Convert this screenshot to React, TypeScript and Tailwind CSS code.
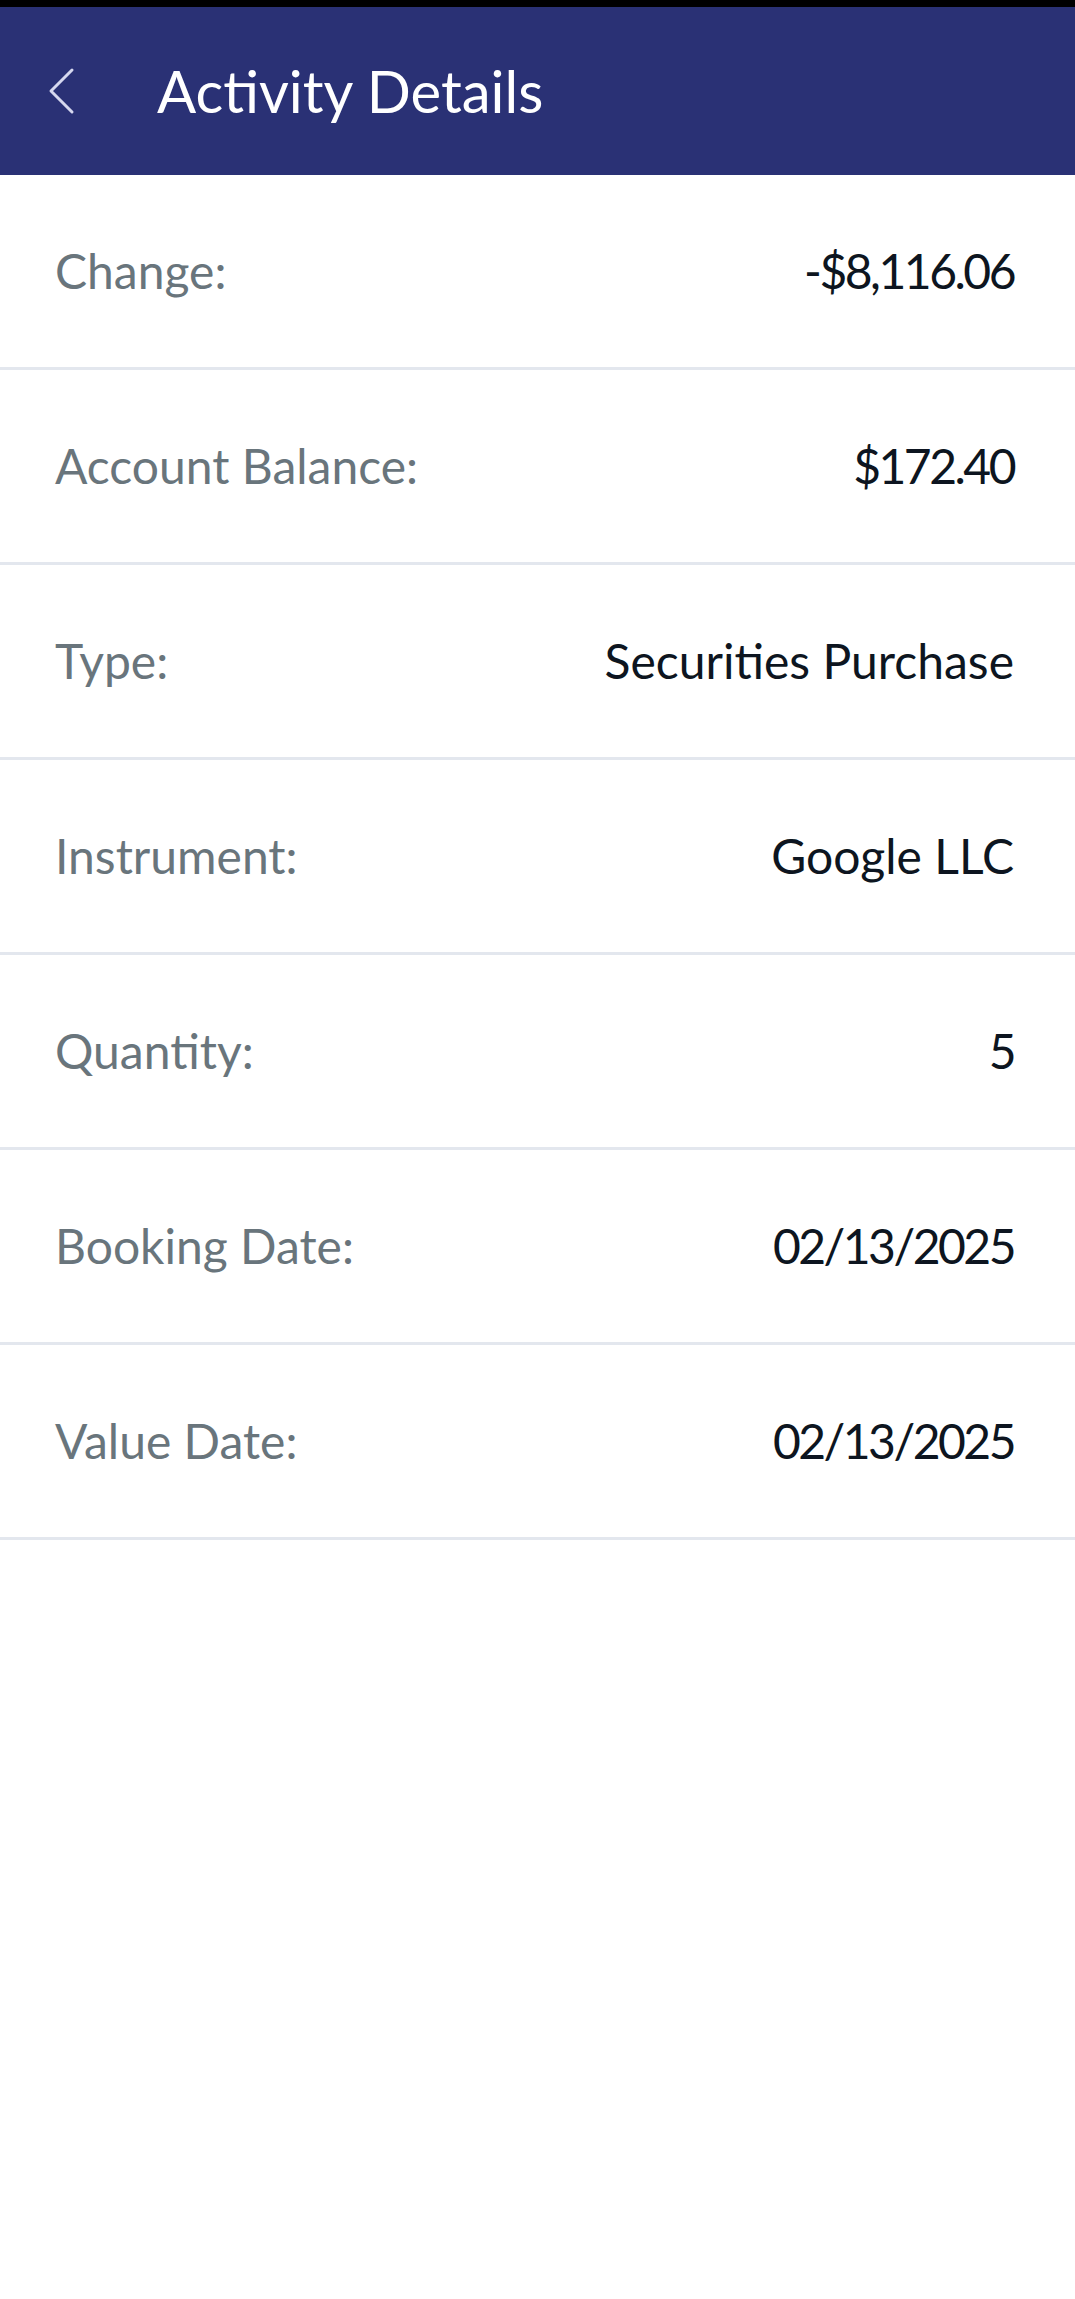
import React from "react";

const rows: [string, string, boolean][] = [
  ["Change:", "-$8,116.06", true],
  ["Account Balance:", "$172.40", true],
  ["Type:", "Securities Purchase", false],
  ["Instrument:", "Google LLC", false],
  ["Quantity:", "5", true],
  ["Booking Date:", "02/13/2025", true],
  ["Value Date:", "02/13/2025", true],
];

export default function App() {
  return (
    <div className="min-h-[2299px] bg-white font-['Lato',sans-serif]">
      <div className="h-[7px] bg-black" />
      <header className="flex h-[168px] items-center bg-[#2a3175]">
        <div className="flex w-[157px] items-center pl-[46px]">
          <svg width="30" height="48" viewBox="0 0 30 48" fill="none">
            <path d="M26 3 L5 24 L26 45" stroke="#d6d8ef" strokeWidth="3" strokeLinecap="round" strokeLinejoin="round" />
          </svg>
        </div>
        <h1 className="text-[58px] leading-none font-normal text-white">Activity Details</h1>
      </header>
      <div>
        {rows.map(([label, value, numeric]) => (
          <div
            key={label}
            className="flex h-[195px] items-center justify-between border-b-[3px] border-[#e3e7ee] pl-[55px] pr-[61px] text-[48px] leading-none"
          >
            <span className="text-[#69757c]">{label}</span>
            <span className={numeric ? "tracking-[-2.5px] text-[#0d1520]" : "text-[#0d1520]"}>{value}</span>
          </div>
        ))}
      </div>
    </div>
  );
}
